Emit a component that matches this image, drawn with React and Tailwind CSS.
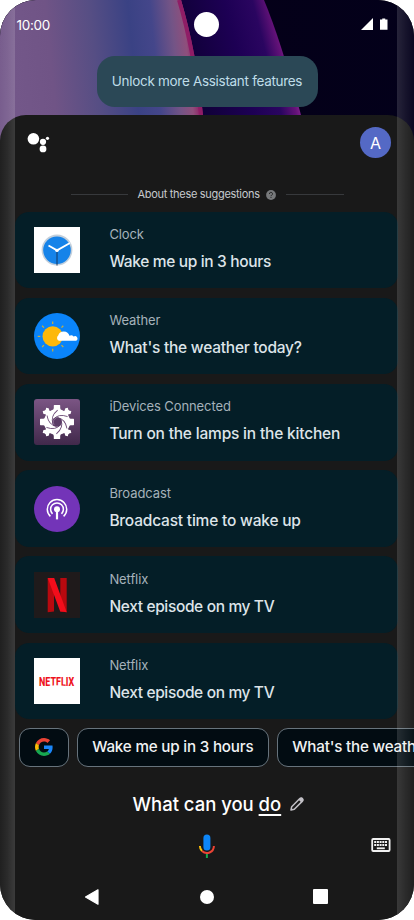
import React from "react";

function Wallpaper() {
  return (
    <svg className="block h-full w-full" viewBox="0 0 414 150" preserveAspectRatio="none">
      <defs>
        <linearGradient id="sky" gradientUnits="userSpaceOnUse" x1="0" y1="60" x2="200" y2="40">
          <stop offset="0" stopColor="#74588a" />
          <stop offset="0.25" stopColor="#705486" />
          <stop offset="0.47" stopColor="#564e84" />
          <stop offset="0.66" stopColor="#3a4284" />
          <stop offset="0.77" stopColor="#44468a" />
          <stop offset="0.87" stopColor="#735486" />
          <stop offset="0.93" stopColor="#8f4f7c" />
          <stop offset="0.965" stopColor="#8f2468" />
          <stop offset="1" stopColor="#8a1a68" />
        </linearGradient>
        <linearGradient id="violet" gradientUnits="userSpaceOnUse" x1="190" y1="62" x2="284" y2="38">
          <stop offset="0" stopColor="#100038" />
          <stop offset="0.5" stopColor="#1d0054" />
          <stop offset="0.78" stopColor="#2a0560" />
          <stop offset="0.93" stopColor="#641278" />
          <stop offset="1" stopColor="#8a2494" />
        </linearGradient>
        <linearGradient id="night" x1="0" y1="0" x2="1" y2="0">
          <stop offset="0" stopColor="#060016" />
          <stop offset="1" stopColor="#03001a" />
        </linearGradient>
      </defs>
      <rect width="414" height="150" fill="url(#night)" />
      <path d="M170 0H264Q280 38 301 115L307 150H170Z" fill="url(#violet)" />
      <path d="M0 0H181Q196 50 203 115L206 150H0Z" fill="url(#sky)" />
      <path d="M179 0Q194 50 201 115" fill="none" stroke="#8f1d66" strokeWidth="4" />
    </svg>
  );
}

function ClockIcon() {
  return (
    <svg viewBox="0 0 46 46" className="size-[46px]">
      <rect width="46" height="46" fill="#fff" />
      <circle cx="23" cy="23" r="15.4" fill="#c3cfdb" />
      <circle cx="23" cy="23.2" r="13.8" fill="#1583e9" />
      <path d="M23 24V38.5" stroke="#17375e" strokeWidth="1" />
      <path d="M14.5 18.5L23 23.4L36 16" fill="none" stroke="#fff" strokeWidth="1.8" />
      <circle cx="23" cy="23.4" r="1.7" fill="#fff" />
    </svg>
  );
}

function WeatherIcon() {
  return (
    <svg viewBox="0 0 46 46" className="size-[46px]">
      <circle cx="23" cy="23" r="23" fill="#0a84fa" />
      <g stroke="#c9ae3c" strokeWidth="1.2">
        {[0, 45, 90, 135, 180, 225, 270, 315].map((a) => (
          <path key={a} d="M18.7 8.4V11" transform={`rotate(${a} 18.7 23.4)`} />
        ))}
      </g>
      <circle cx="18.7" cy="23.4" r="10.2" fill="#fdb80a" />
      <path d="M25 27.8a3 3 0 0 1-.8-5.2 5.8 5.8 0 0 1 11.2.2 3.3 3.3 0 0 1 4.2.7 2.3 2.3 0 0 1 2.6 4.3z" fill="#fff" />
    </svg>
  );
}

function IDevicesIcon() {
  return (
    <svg viewBox="0 0 46 46" className="size-[46px]">
      <defs>
        <linearGradient id="plum" x1="0" y1="0" x2="0" y2="1">
          <stop offset="0" stopColor="#7b5584" />
          <stop offset="1" stopColor="#41294b" />
        </linearGradient>
      </defs>
      <rect width="46" height="46" rx="3" fill="url(#plum)" />
      <g fill="#fff">
        {[0, 90, 180, 270].map((a) => (
          <path key={a} d="M17.4 12.5Q20 10.8 19.8 9V6.6Q19.8 6 20.4 6H25.6Q26.2 6 26.2 6.6V9Q26 10.8 28.6 12.5Z" transform={`rotate(${a} 23 23)`} />
        ))}
        {[45, 135, 225, 315].map((a) => (
          <path key={a} d="M19.6 13L20.4 9.8L19.2 7.4L20.6 5.2L22 6.2H24L25.4 5.2L26.8 7.4L25.6 9.8L26.4 13Z" transform={`rotate(${a} 23 23)`} />
        ))}
        <circle cx="23" cy="23" r="13" />
      </g>
      <g fill="none" stroke="#6a4874" strokeWidth="0.9">
        {[0, 60, 120, 180, 240, 300].map((a) => (
          <path key={a} d="M19.4 20.4Q24.5 14.2 33.6 17.6" transform={`rotate(${a} 23 23)`} />
        ))}
      </g>
      <circle cx="23" cy="23" r="4.8" fill="#5b3c66" />
      <path d="M20.2 25.6A4 4 0 0 1 22.2 19.2" fill="none" stroke="#8a6c93" strokeWidth="1" />
    </svg>
  );
}

function BroadcastIcon() {
  return (
    <svg viewBox="0 0 46 46" className="size-[46px]">
      <circle cx="23" cy="23" r="23" fill="#7334b8" />
      <g fill="none" stroke="#fff" strokeWidth="1.5">
        <path d="M16.4 30.4A9.7 9.7 0 1 1 29.6 30.4" />
        <path d="M18.5 27.9A6.4 6.4 0 1 1 27.5 27.9" />
      </g>
      <circle cx="23" cy="23.2" r="3" fill="#fff" />
      <path d="M23 24V33.4" stroke="#fff" strokeWidth="2.2" />
    </svg>
  );
}

function NetflixIcon() {
  return (
    <svg viewBox="0 0 46 46" className="size-[46px]">
      <rect width="46" height="46" fill="#1f1a1b" />
      <path d="M13.7 6H20V39.4L13.7 40.2Z" fill="#b8090f" />
      <path d="M26.3 6H32.7V40.2L26.3 39.4Z" fill="#b8090f" />
      <path d="M13.7 6H20.2L32.7 40.2Q29.5 39.6 26.2 39.5Z" fill="#f30d1b" />
    </svg>
  );
}

function NetflixWordmark() {
  return (
    <svg viewBox="0 0 46 46" className="size-[46px]">
      <rect width="46" height="46" fill="#fff" />
      <g transform="translate(5 28.2) scale(0.7 1)">
        <text fontFamily="Roboto, sans-serif" fontWeight="800" fontSize="12.8" fill="#ee1220">NETFLIX</text>
      </g>
      <path d="M8.5 29Q23 25.6 37.5 29Z" fill="#fff" />
    </svg>
  );
}

const suggestions = [
  { app: "Clock", phrase: "Wake me up in 3 hours", Icon: ClockIcon, tracking: "tracking-[-0.34px]" },
  { app: "Weather", phrase: "What's the weather today?", Icon: WeatherIcon, tracking: "tracking-[-0.24px]" },
  { app: "iDevices Connected", phrase: "Turn on the lamps in the kitchen", Icon: IDevicesIcon, tracking: "tracking-[-0.19px]" },
  { app: "Broadcast", phrase: "Broadcast time to wake up", Icon: BroadcastIcon, tracking: "tracking-[-0.2px]" },
  { app: "Netflix", phrase: "Next episode on my TV", Icon: NetflixIcon, tracking: "tracking-[-0.36px]" },
  { app: "Netflix", phrase: "Next episode on my TV", Icon: NetflixWordmark, tracking: "tracking-[-0.36px]" },
];

function StatusBar() {
  return (
    <div className="grid h-[56px] grid-cols-[150px_113px_151px] pt-[12px]">
      <div className="pt-[2px] pl-[16.5px] text-[13.5px] leading-[22px] tracking-[-0.3px] text-white">10:00</div>
      <div className="flex justify-center">
        <div className="size-[25px] rounded-full bg-white" />
      </div>
      <div className="flex justify-end gap-[7px] pt-[6px] pr-[26.5px]">
        <svg viewBox="0 0 12 12" className="size-[12px]"><path d="M12 0V12H0Z" fill="#fff" /></svg>
        <svg viewBox="0 0 8 12" className="h-[12px] w-[7.5px]"><path d="M2.4 0H5.6V1.2H8V12H0V1.2H2.4Z" fill="#fff" /></svg>
      </div>
    </div>
  );
}

function Chip({ children }) {
  return (
    <div className="flex h-[38.5px] shrink-0 items-center rounded-[11px] border border-[#67737c] bg-[#020c12] px-[14.4px] text-[15.2px] font-medium tracking-[-0.19px] whitespace-nowrap text-[#f1f3f4]">
      {children}
    </div>
  );
}

function GoogleG() {
  return (
    <svg viewBox="0 0 48 48" className="mx-[0.5px] size-[18px]">
      <path fill="#EA4335" d="M24 9.5c3.54 0 6.71 1.22 9.21 3.6l6.85-6.85C35.9 2.38 30.47 0 24 0 14.62 0 6.51 5.38 2.56 13.22l7.98 6.19C12.43 13.72 17.74 9.5 24 9.5z" />
      <path fill="#1a86f8" d="M46.98 24.55c0-1.57-.15-3.09-.38-4.55H24v9.02h12.94c-.58 2.96-2.26 5.48-4.78 7.18l7.73 6c4.51-4.18 7.09-10.36 7.09-17.65z" />
      <path fill="#FBBC05" d="M10.53 28.59c-.48-1.45-.76-2.99-.76-4.59s.27-3.14.76-4.59l-7.98-6.19C.92 16.46 0 20.12 0 24c0 3.88.92 7.54 2.56 10.78l7.97-6.19z" />
      <path fill="#17a750" d="M24 48c6.48 0 11.93-2.13 15.89-5.81l-7.73-6c-2.15 1.45-4.92 2.3-8.16 2.3-6.26 0-11.57-4.22-13.47-9.91l-7.98 6.19C6.51 42.62 14.62 48 24 48z" />
    </svg>
  );
}

export default function App() {
  return (
    <div className="h-[920px] w-[414px] overflow-hidden bg-white font-['Inter','Roboto',sans-serif]">
      <div className="relative h-full w-full overflow-hidden rounded-[36px] bg-[#191919]">
        <div className="absolute inset-x-0 top-0 h-[150px]">
          <Wallpaper />
        </div>

        <div className="relative flex h-full flex-col">
          <StatusBar />
          <div className="flex h-[58.5px] shrink-0 justify-center">
            <div className="flex h-[51px] w-[221px] items-center justify-center rounded-[18px] bg-[#2b4856] text-[13.5px] tracking-[-0.3px] whitespace-nowrap text-[#bfdde8]">
              Unlock more Assistant features
            </div>
          </div>

          <div className="flex min-h-0 flex-1 flex-col rounded-t-[26px] bg-[#191919]">
            <div className="flex h-[73px] shrink-0 justify-between pt-[12.5px] pr-[23px] pl-[27px]">
              <svg viewBox="0 0 24 24" className="mt-[4px] size-[24px]">
                <g fill="#fff">
                  <circle cx="6.4" cy="7.8" r="5.8" />
                  <circle cx="16" cy="10.8" r="3.1" />
                  <circle cx="20.5" cy="7.3" r="1.6" />
                  <circle cx="16" cy="17.9" r="3.4" />
                </g>
              </svg>
              <div className="flex size-[31px] items-center justify-center rounded-full bg-[#5469c5] text-[16px] text-white">A</div>
            </div>

            <div className="flex h-[14px] shrink-0 items-center pl-[70.5px]">
              <div className="h-[1.5px] w-[57.5px] bg-[#37393c]" />
              <div className="ml-[9.5px] w-[128.5px] text-[11px] tracking-[-0.3px] whitespace-nowrap text-[#c6c9cd]">About these suggestions</div>
              <svg viewBox="0 0 10 10" className="size-[10px]">
                <circle cx="5" cy="5" r="4.9" fill="#77797b" />
                <path d="M3.5 4A1.5 1.5 0 1 1 5.6 5.2Q5 5.6 5 6.2M5 7.1V8" fill="none" stroke="#191919" strokeWidth="0.9" />
              </svg>
              <div className="ml-[10px] h-[1.5px] w-[57.5px] bg-[#37393c]" />
            </div>

            <div className="mt-[10.2px] mr-[16.5px] ml-[15px] flex flex-col gap-[9.6px]">
              {suggestions.map(({ app, phrase, Icon, tracking }, i) => (
                <div key={i} className="flex h-[76.6px] rounded-[14px] bg-[#041e27] pt-[15.3px] pl-[19.4px]">
                  <Icon />
                  <div className="ml-[29px] whitespace-nowrap">
                    <div className="text-[13px] leading-[15px] tracking-[-0.1px] text-[#a5b2ba]">{app}</div>
                    <div className={`mt-[10px] text-[15.5px] leading-[20px] font-medium text-[#dde4e9] ${tracking}`}>{phrase}</div>
                  </div>
                </div>
              ))}
            </div>

            <div className="mt-[8.8px] ml-[19px] flex gap-[8px] overflow-hidden">
              <Chip><GoogleG /></Chip>
              <Chip>Wake me up in 3 hours</Chip>
              <Chip>What's the weather today?</Chip>
            </div>

            <div className="mt-[24.5px] flex h-[26px] shrink-0 items-center pl-[132.5px]">
              <div className="w-[157.5px] text-[18.5px] leading-[26px] font-medium tracking-[-0.02px] whitespace-nowrap text-white">
                What can you <span className="underline decoration-[1.5px] underline-offset-[3px]">do</span>
              </div>
              <svg viewBox="0 0 14 14" className="size-[14px]">
                <path d="M1 13L1.7 9.7L9.6 1.8Q11 .5 12.3 1.7T12.2 4.4L4.3 12.3Z" fill="none" stroke="#c2c0c6" strokeWidth="1.5" strokeLinejoin="round" />
                <path d="M8.6 2.7L11.3 5.4L13.2 3.4Q13.8 1 11.6.5Z" fill="#c2c0c6" />
              </svg>
            </div>

            <div className="mt-[16.5px] flex h-[26px] shrink-0 items-start pl-[198px]">
              <svg viewBox="0 0 17 26" className="h-[26px] w-[17px]">
                <path d="M1.9 12A7 7 0 0 0 4 17" fill="none" stroke="#fbbc05" strokeWidth="2" />
                <path d="M4 17A7 7 0 0 0 15.9 12" fill="none" stroke="#ea4335" strokeWidth="2" />
                <path d="M8.9 20V24" stroke="#17a750" strokeWidth="2" />
                <rect x="5.4" y="0.5" width="7" height="16" rx="3.5" fill="#0d86f8" />
              </svg>
              <svg viewBox="0 0 20 14" className="mt-[4px] ml-[156px] h-[14px] w-[20px]">
                <rect x="1.2" y="1" width="17.4" height="12" rx="1" fill="none" stroke="#f1f1f1" strokeWidth="1.8" />
                <g fill="#f1f1f1">
                  {[3.2, 5.9, 8.6, 11.3, 14].map((x) => (
                    <React.Fragment key={x}>
                      <rect x={x} y="3" width="2" height="2" />
                      <rect x={x} y="6" width="2" height="2" />
                    </React.Fragment>
                  ))}
                  <rect x="5.8" y="9.4" width="8" height="1.8" />
                </g>
              </svg>
            </div>

            <div className="mt-[28px] flex h-[18px] shrink-0 items-center pl-[84px]">
              <svg viewBox="0 0 15 18" className="h-[18px] w-[15px]"><path d="M1.5 9L14 1.8V16.2Z" fill="#fff" stroke="#fff" strokeWidth="1.2" strokeLinejoin="round" /></svg>
              <div className="ml-[100.8px] size-[14px] rounded-full bg-white" />
              <div className="ml-[99.5px] size-[15px] rounded-[1px] bg-white" />
            </div>
          </div>
        </div>

        {/* Curved glass edges lie over the whole screen */}
        <div className="absolute inset-y-0 left-0 w-[15px] bg-linear-to-r from-white/3 via-white/8 to-white/15" />
        <div className="absolute inset-y-0 right-0 w-[17px] bg-linear-to-l from-white/3 via-white/8 to-white/14" />
      </div>
    </div>
  );
}
